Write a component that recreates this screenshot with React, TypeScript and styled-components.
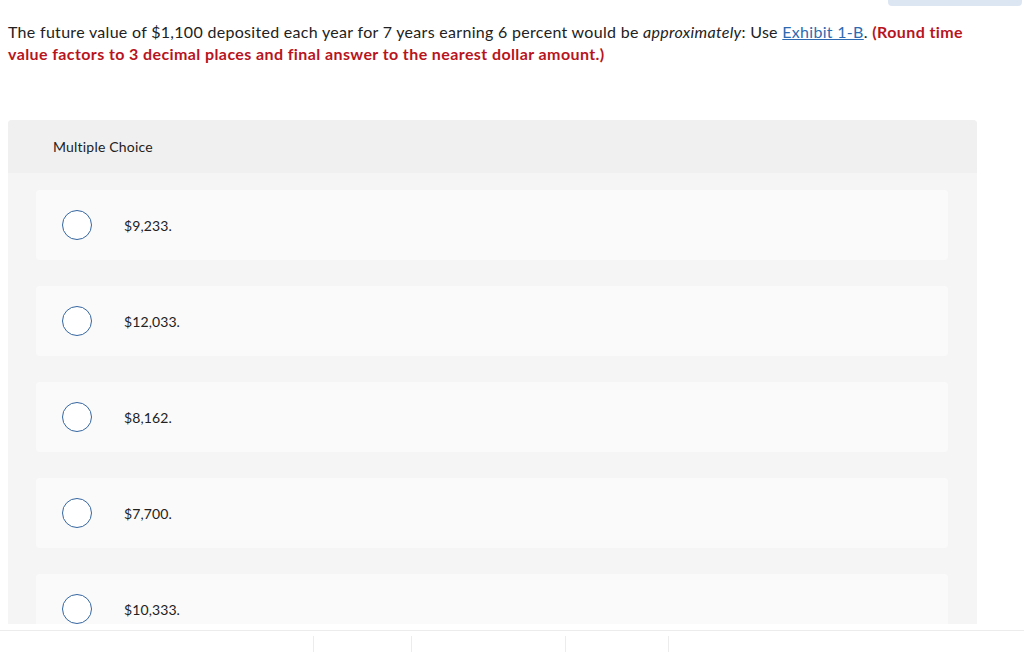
import React from 'react';
import styled, { createGlobalStyle } from 'styled-components';

// Multiple-choice question card, clipped at the bottom by the page footer.

const GlobalStyle = createGlobalStyle`
  html, body {
    margin: 0;
    padding: 0;
    background: #ffffff;
  }
  body {
    font-family: Lato, "Open Sans", "Liberation Sans", sans-serif;
    color: #222;
  }
`;

const Page = styled.div`
  width: 1024px;
  height: 652px;
  display: flex;
  flex-direction: column;
  overflow: hidden;
`;

const Scroll = styled.div`
  height: 624px;
  flex-shrink: 0;
  overflow: hidden;
  display: flex;
  flex-direction: column;
`;

const TopStrip = styled.div`
  display: flex;
  justify-content: flex-end;
  height: 6px;
  padding-right: 2px;
  flex-shrink: 0;
`;

const TabStub = styled.div`
  width: 134px;
  height: 6px;
  background: #dce6f2;
  border-radius: 0 0 4px 4px;
`;

const Prompt = styled.p`
  margin: 15px 0 0;
  padding: 0 50px 0 8px;
  font-size: 16px;
  line-height: 22px;
  letter-spacing: 0.3px;
  color: #222;
`;

const Exhibit = styled.a`
  color: #2e6ab1;
  text-decoration: underline;
`;

const Hint = styled.strong`
  color: #b8141e;
  font-weight: 700;
  letter-spacing: 0.4px;
`;

const Panel = styled.section`
  margin: 55px 0 0 8px;
  width: 969px;
  background: #f5f5f5;
  border-radius: 4px 4px 0 0;
  flex-shrink: 0;
`;

const PanelHeader = styled.div`
  height: 53px;
  display: flex;
  align-items: center;
  padding-left: 45px;
  background: #f0f0f0;
  border-radius: 4px 4px 0 0;
  font-size: 14px;
  letter-spacing: 0.2px;
  color: #222;
`;

const Choices = styled.div`
  display: flex;
  flex-direction: column;
  gap: 26px;
  padding: 17px 29px 26px 28px;
`;

const Choice = styled.label`
  height: 70px;
  display: flex;
  align-items: center;
  gap: 32px;
  padding-left: 26px;
  background: #fafafa;
  border-radius: 4px;
  font-size: 14px;
  letter-spacing: 0.1px;
  color: #222;
  cursor: pointer;
`;

const Radio = styled.span`
  width: 30px;
  height: 30px;
  box-sizing: border-box;
  border: 1px solid #3566a0;
  border-radius: 50%;
  background: #fff;
  flex-shrink: 0;
`;

const Footer = styled.div`
  margin-top: 6px;
  height: 21px;
  flex-shrink: 0;
  border-top: 1px solid #ececec;
  display: flex;
  align-items: flex-end;
  padding-left: 313px;
`;

const FooterCell = styled.div<{ $w: number }>`
  width: ${(p) => p.$w}px;
  height: 16px;
  border-left: 1px solid #ececec;
`;

const options = ['$9,233.', '$12,033.', '$8,162.', '$7,700.', '$10,333.'];

export default function App() {
  return (
    <Page>
      <GlobalStyle />
      <Scroll>
        <TopStrip>
          <TabStub />
        </TopStrip>
        <Prompt>
          The future value of $1,100 deposited each year for 7 years earning 6 percent would be{' '}
          <em>approximately</em>: Use <Exhibit href="#">Exhibit 1-B</Exhibit>.{' '}
          <Hint>(Round time value factors to 3 decimal places and final answer to the nearest dollar amount.)</Hint>
        </Prompt>
        <Panel>
          <PanelHeader>Multiple Choice</PanelHeader>
          <Choices>
            {options.map((o) => (
              <Choice key={o}>
                <Radio />
                {o}
              </Choice>
            ))}
          </Choices>
        </Panel>
      </Scroll>
      <Footer>
        <FooterCell $w={97} />
        <FooterCell $w={153} />
        <FooterCell $w={102} />
        <FooterCell $w={1} />
      </Footer>
    </Page>
  );
}
